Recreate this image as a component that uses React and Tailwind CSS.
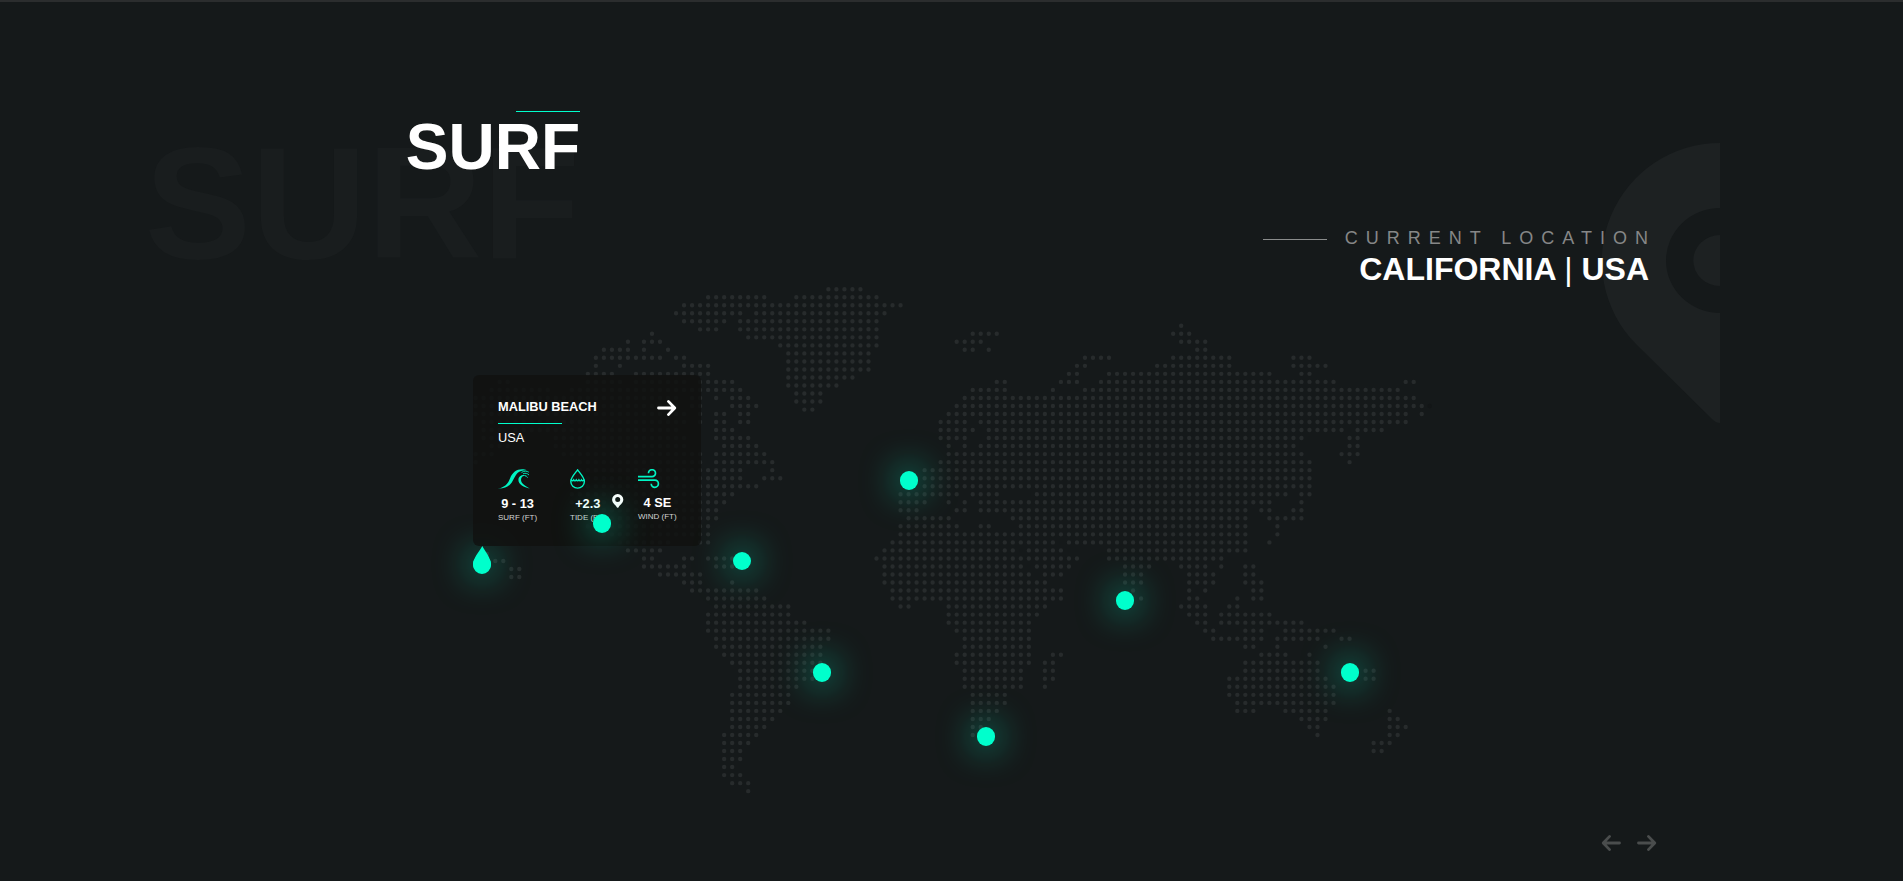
import React from "react";

const PITCH = 8.018;
const ROW_PITCH = 8.025;
const COL0 = 6.6; // x of column 0 inside the map
const ROW0 = 40.7; // y of row 0 inside the map
const NORTH_ROW0 = 4.2; // Greenland and the arctic islands sit on their own rows

// Each line lists the column ranges filled with dots on that row.
const NORTH = [
  "44-48",
  "29-36 40-50",
  "26-53",
  "25-33 35-51",
  "26-31 33-50",
  "28-30 33-50",
  "34-50",
  "38-50",
  "39-49",
  "39-49",
  "39-49",
  "39-47",
  "39-45",
  "40-43",
  "40-43",
  "41-42",
];

const MAIN = [
  "88",
  "22 62-65 87-89",
  "19 21-23 60-63 88-91",
  "16-19 21 24 61-62 64 90-91",
  "15-23 25-26 76-79 87-94 102-104",
  "15 18 26-29 75-76 85-94 102-106",
  "14-17 20-29 74-75 79-99 103-104",
  "3-4 14-18 20-26 28-32 65-66 73-75 78-107 116-117",
  "2-9 12-33 62-66 72 76-115",
  "0-25 27-28 30 32-34 61-117",
  "0-25 27-28 32-35 60-118",
  "0-26 28 30-31 33-34 59-116 118",
  "1-26 28 30-31 33-34 58-61 63-116",
  "1-3 5-25 30-32 58-62 64-108 110-113",
  "1-6 10-26 30-34 58-61 64-103 109-110",
  "2-4 10-26 31-35 59 61 63-102 109-110",
  "0-2 11-28 30-36 59-103 108-110",
  "0 13-28 30-37 58-104 109",
  "13-33 37 56-104",
  "12-33 36-38 56-104",
  "12-35 56-104",
  "12-32 53-60 62-65 70-101 103-104",
  "12-31 53-56 59 61 63-99 103",
  "13-30 53-55 60-61 63-96 98-99 102-103",
  "14-30 54-59 67-96 99-103",
  "14-29 53-60 63-64 68-96 100",
  "16-29 53-96 100",
  "18-24 28-29 52-72 74-96 99",
  "19-23 51-67 69-73 79-96",
  "21-22 26-27 29-32 50-75 79-93",
  "21-26 30-32 51-68 70-74 81-84 88-91 93 96-97",
  "23-28 51-69 71-73 81-83 89-92 96-97",
  "26-28 32 51-71 81-83 89-92 96-98",
  "27-35 52-73 82 89 91 97-98",
  "29-36 52-73 83 89-90 95 97-98",
  "30-39 53-54 59-71 88-91 94-95",
  "29-39 59-70 89-91 93-99",
  "29-41 59-69 90-91 93-103",
  "29-44 60-69 91-92 96-98 101-107",
  "30-44 61-69 92-98 100-105 108-109",
  "30-43 61-69 96-97 100 106",
  "31-43 60-69 72-73 98-101 104",
  "32-43 60-69 71-72 96-105",
  "33-42 61-68 71-72 96-105 111-112",
  "33-42 61-68 71-72 94-106 111-112",
  "33-40 61-68 71 94-107",
  "32-39 62-66 94-107",
  "32-39 62-66 95-107",
  "32-38 62-65 95-97 101-106 114",
  "32-37 62-64 103-106 114-115",
  "32-36 62-63 104-105 114-116",
  "31-35 62 105 114-115",
  "31-34 112-114",
  "31-33 112-113",
  "31-33",
  "31-32",
  "31-33",
  "32-34",
  "34",
];

const HAWAII = [
  [18, 269],
  [26.3, 276],
  [34.3, 276],
  [42.3, 284],
  [50.3, 284],
  [42.3, 292],
  [50.3, 292],
];

const dot = (x, y) =>
  `M${(x - 2.2).toFixed(2)} ${y.toFixed(2)}a2.2 2.2 0 1 0 4.4 0a2.2 2.2 0 1 0-4.4 0`;

function rowsToPath(rows, y0) {
  return rows
    .map((row, r) =>
      row
        .split(" ")
        .map((range) => {
          const [from, to = from] = range.split("-").map(Number);
          let d = "";
          for (let c = from; c <= to; c++) d += dot(COL0 + c * PITCH, y0 + r * ROW_PITCH);
          return d;
        })
        .join("")
    )
    .join("");
}

const MAP_PATH =
  rowsToPath(NORTH, NORTH_ROW0) +
  rowsToPath(MAIN, ROW0) +
  HAWAII.map(([x, y]) => dot(x, y)).join("");

function Arrow({ className = "" }) {
  return (
    <svg className={className} width="20" height="18" viewBox="0 0 20 18" fill="none" stroke="currentColor" strokeWidth="2.8" strokeLinecap="round" strokeLinejoin="round">
      <path d="M1.5 9H17.4M11.4 2.4L17.8 9L11.4 15.6" />
    </svg>
  );
}

function WaveIcon() {
  return (
    <svg width="32" height="20" viewBox="0 0 32 20" fill="#00f5c4">
      <path d="M0 19.7C6.500 18.500 10 14.800 12 9.500C14.300 3.300 18.500 .2 24 .2C26 .2 27.500 .6 28.500 1.200C25 1 22 1.800 19.500 4C17.500 6 16.300 9 14.600 12C11.500 17.500 7.500 19.800 0 19.700Z" />
      <path d="M31.800 19.400C26 18.500 20.300 15.500 20.400 10.800C20.500 7 24 5.200 28.500 6.200C25 6.400 22.900 8 23 11C23.200 14.500 27 17 31.800 19.400Z" />
      <path d="M23.500 3.400C26.500 1.600 29 2 30.800 3.200M25 4.800C27.500 3.800 29.500 4.400 31 6M27 7C28.200 6.800 29 7.400 29.500 8.600" fill="none" stroke="#00f5c4" strokeWidth=".9" />
    </svg>
  );
}

function TideIcon() {
  return (
    <svg width="16" height="20" viewBox="0 0 16 20" fill="none" stroke="#00f5c4" strokeWidth="1.4">
      <path d="M7.6 .8C5 4.300 .8 8.400 .8 12.500A6.800 6.600 0 0 0 14.400 12.500C14.400 8.400 10.200 4.300 7.600 .8Z" />
      <path d="M1 10.400Q2.400 13 3.700 10.800Q5 13 6.300 10.800Q7.600 13 8.900 10.800Q10.200 13 11.500 10.800Q12.800 13 14.200 10.400" />
    </svg>
  );
}

function WindIcon() {
  return (
    <svg width="22" height="20" viewBox="0 0 22 20" fill="none" stroke="#00f5c4" strokeWidth="1.7">
      <path d="M0 7.7H14A3.5 3.5 0 1 0 10.5 4.2" />
      <path d="M0 11.1H16.9A3.6 3.6 0 1 1 13.2 14.8" />
    </svg>
  );
}

function Stat({ icon, value, label, className = "" }) {
  return (
    <div className={`flex flex-col items-start ${className}`}>
      <div className="h-5">{icon}</div>
      <div className="flex flex-col items-center">
        <span className="whitespace-pre text-[12.8px] leading-[15px] font-bold">{value}</span>
        <span className="mt-[2px] text-[8px] leading-[10px] text-[#d4d5d5]">{label}</span>
      </div>
    </div>
  );
}

function SpotCard() {
  return (
    <article className="absolute left-1 top-[90px] h-[171px] w-[228px] rounded-md bg-[#101211]/85 pl-[25px] pr-6 pt-[19px] text-white">
      <div className="flex items-start justify-between">
        <div>
          <h3 className="mt-[5px] text-[12.8px] leading-[15px] font-bold">MALIBU BEACH</h3>
          <div className="mt-[9px] h-px w-16 bg-[#00ffcc]" />
          <p className="mt-[6px] text-[12.8px] leading-[15px]">USA</p>
        </div>
        <Arrow className="mt-[5px]" />
      </div>
      <div className="mt-[24px] flex">
        <Stat className="w-[72px] gap-[7px]" icon={<WaveIcon />} value="9 - 13" label="SURF (FT)" />
        <Stat className="w-[68px] gap-[7px]" icon={<TideIcon />} value="+2.3" label="TIDE (FT)" />
        <Stat className="gap-[6px]" icon={<WindIcon />} value="4 SE" label="WIND (FT)" />
      </div>
    </article>
  );
}

const SPOTS = [
  { name: "mexico", place: "left-[124px] top-[229px] h-[19px]" },
  { name: "caribbean", place: "left-[264px] top-[267px] h-[18px]" },
  { name: "portugal", place: "left-[431px] top-[186px] h-[19px]" },
  { name: "brazil", place: "left-[344px] top-[378px] h-[19px]" },
  { name: "south-africa", place: "left-[508px] top-[442px] h-[19px]" },
  { name: "sri-lanka", place: "left-[647px] top-[306px] h-[19px]" },
  { name: "australia", place: "left-[872px] top-[378px] h-[19px]" },
];

function WorldMap() {
  return (
    <section className="relative ml-[469px] h-[515px] w-[970px]">
      <svg width="970" height="515" viewBox="0 0 970 515" fill="#272b2c">
        <path d={MAP_PATH} />
        <circle cx={COL0 + 119 * PITCH} cy={ROW0 + 10 * ROW_PITCH} r="2.2" fill="#131617" />
      </svg>
      <div className="absolute left-1 top-[270px] size-[18px] rounded-full bg-[#00ffcc] shadow-[0_0_34px_4px_rgba(0,255,204,0.5)]" />
      <svg className="absolute left-1 top-[261px]" width="18" height="28" viewBox="0 0 18 28" fill="#00ffcc">
        <path d="M9.3 0C12.500 5.800 18 12 18 19A9 9 0 0 1 0 19C0 12 6.200 5.800 9.300 0Z" />
      </svg>
      <SpotCard />
      <svg className="absolute left-[143px] top-[209px]" width="12" height="14" viewBox="0 0 12 14" fill="#fff">
        <path fillRule="evenodd" d="M5.7 0A5.6 5.6 0 0 0 .1 5.6C.1 8.6 2.4 10 5 13.4Q5.7 14 6.4 13.4C9 10 11.3 8.6 11.3 5.6A5.6 5.6 0 0 0 5.7 0ZM5.7 3A2.5 2.5 0 1 1 5.7 8A2.5 2.5 0 0 1 5.7 3Z" />
      </svg>
      {SPOTS.map((spot) => (
        <button
          key={spot.name}
          className={`absolute w-[18px] rounded-full bg-[#00ffcc] shadow-[0_0_34px_4px_rgba(0,255,204,0.5)] ${spot.place}`}
        />
      ))}
    </section>
  );
}

export default function App() {
  return (
    <main className="relative h-[881px] w-full overflow-hidden border-t-2 border-[#2b2d2e] bg-[#15191a] font-['Liberation_Sans',Arial,sans-serif] text-white">
      <svg className="absolute left-[1600px] top-[141px]" width="120" height="282" viewBox="0 0 120 282" fill="#1d2122">
        <path d="M120 0A118 118 0 0 0 36 201L112 276Q116 280 120 280V170A54 52.500 0 0 1 120 65Z" />
        <path d="M120 92A26.700 25.500 0 0 0 120 143Z" />
      </svg>

      <header className="relative flex w-[580px] flex-col items-end pt-[109px]">
        <span className="absolute right-0 top-[121px] text-[160px] leading-[160px] font-bold text-[#191d1e]">SURF</span>
        <div className="relative h-px w-16 bg-[#00ffcc]" />
        <h1 className="relative mt-[3px] text-[64px] leading-[64px] font-bold">SURF</h1>
      </header>

      <section className="relative mt-[49px] flex flex-col items-end pr-[254px]">
        <div className="-mr-[7px] flex items-center gap-[18px]">
          <div className="mt-[3px] h-px w-16 bg-[#8a8c8c]" />
          <p className="text-[18px] leading-[20px] tracking-[8px] text-[#868787]">CURRENT LOCATION</p>
        </div>
        <h2 className="mt-[5px] text-[32px] leading-[32px] font-bold">
          CALIFORNIA <span className="font-normal">|</span> USA
        </h2>
      </section>

      <WorldMap />

      <nav className="mt-[34px] flex justify-end gap-4 pr-[246px] text-[#4a4d4d]">
        <Arrow className="rotate-180" />
        <Arrow />
      </nav>
    </main>
  );
}
